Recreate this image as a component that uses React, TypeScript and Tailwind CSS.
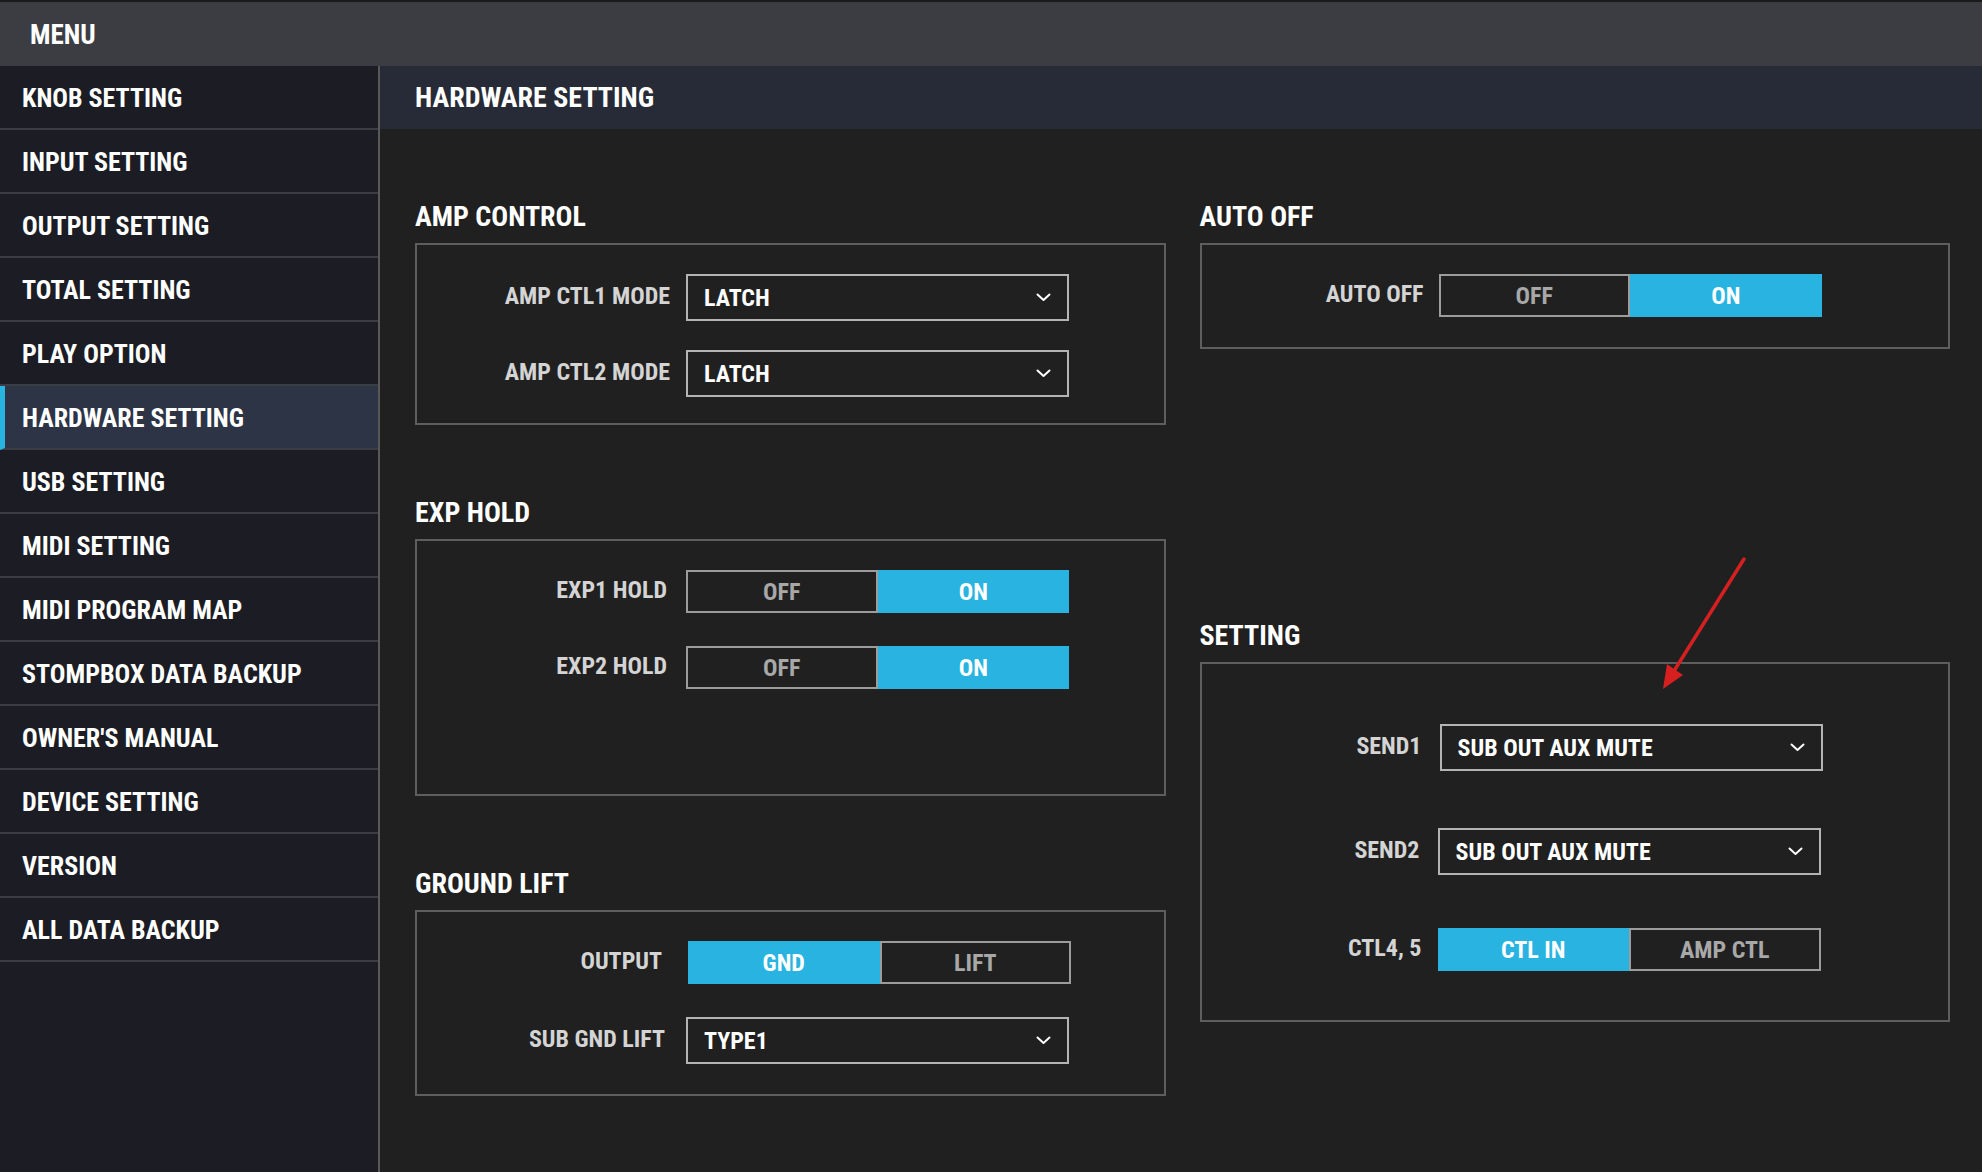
const menu = [
  "KNOB SETTING",
  "INPUT SETTING",
  "OUTPUT SETTING",
  "TOTAL SETTING",
  "PLAY OPTION",
  "HARDWARE SETTING",
  "USB SETTING",
  "MIDI SETTING",
  "MIDI PROGRAM MAP",
  "STOMPBOX DATA BACKUP",
  "OWNER'S MANUAL",
  "DEVICE SETTING",
  "VERSION",
  "ALL DATA BACKUP",
];

function Chevron() {
  return (
    <svg width="15" height="9" viewBox="0 0 15 9" fill="none">
      <path d="M1.5 1.5 L7.5 7 L13.5 1.5" stroke="white" strokeWidth="2" strokeLinecap="round" strokeLinejoin="round" />
    </svg>
  );
}

function Select({ value }: { value: string }) {
  return (
    <div className="flex h-[47px] w-[383px] items-center justify-between border-2 border-[#b4b4b4] pl-[16px] pr-[16px] text-[24px] text-white">
      <span>{value}</span>
      <Chevron />
    </div>
  );
}

function Toggle({ left, right, active }: { left: string; right: string; active: 0 | 1 }) {
  const on = "flex w-1/2 items-center justify-center bg-[#29b3e1] text-white";
  const off = "flex w-1/2 items-center justify-center border-2 border-[#9c9c9c] text-[#a8a8a8]";
  return (
    <div className="flex h-[43px] w-[383px] text-[24px]">
      <div className={active === 0 ? on : off}>{left}</div>
      <div className={active === 1 ? on : off}>{right}</div>
    </div>
  );
}

function Row({ label, labelClass, children }: { label: string; labelClass: string; children: React.ReactNode }) {
  return (
    <div className="flex items-center">
      <div className={`${labelClass} mb-[4px] text-right text-[24px] text-[#d4d4d4]`}>{label}</div>
      {children}
    </div>
  );
}

function Section({ title, className, boxClass, children }: { title: string; className?: string; boxClass: string; children: React.ReactNode }) {
  return (
    <div className={className}>
      <div className="mb-[10px] h-[32px] text-[28px] leading-[32px] text-white">{title}</div>
      <div className={`border-2 border-[#5e5e5e] ${boxClass}`}>{children}</div>
    </div>
  );
}

export default function App() {
  return (
    <div className="relative flex h-[1172px] w-full flex-col overflow-hidden bg-[#202020] font-['Roboto_Condensed','Liberation_Sans',sans-serif] font-bold">
      <div className="flex h-[66px] items-center border-t-2 border-[#191919] bg-[#3c3d42] pl-[30px] pt-[2px] text-[27px] text-white">
        MENU
      </div>
      <div className="flex flex-1">
        <aside className="w-[380px] border-r-2 border-[#585858] bg-[#1c1d24]">
          {menu.map((m) => {
            const active = m === "HARDWARE SETTING";
            return (
              <div
                key={m}
                className={`flex h-[64px] items-center border-b-2 border-[#3b3d45] pt-[3px] text-[26px] text-white ${
                  active ? "border-l-[5px] border-l-[#29b3e1] bg-[#2c3445] pl-[17px]" : "pl-[22px]"
                }`}
              >
                {m}
              </div>
            );
          })}
        </aside>
        <main className="flex flex-1 flex-col">
          <div className="flex h-[63px] items-center bg-[#262b37] pl-[35px] text-[28px] text-white">HARDWARE SETTING</div>
          <div className="grid grid-cols-2 gap-x-[34px] pl-[35px] pr-[32px] pt-[72px]">
            <div className="flex flex-col">
              <Section title="AMP CONTROL" boxClass="flex flex-col gap-[29px] pt-[29px] pb-[26px]">
                <Row label="AMP CTL1 MODE" labelClass="w-[269px] pr-[16px]">
                  <Select value="LATCH" />
                </Row>
                <Row label="AMP CTL2 MODE" labelClass="w-[269px] pr-[16px]">
                  <Select value="LATCH" />
                </Row>
              </Section>
              <Section title="EXP HOLD" className="mt-[72px]" boxClass="flex flex-col gap-[33px] pt-[29px] pb-[105px]">
                <Row label="EXP1 HOLD" labelClass="w-[269px] pr-[19px]">
                  <Toggle left="OFF" right="ON" active={1} />
                </Row>
                <Row label="EXP2 HOLD" labelClass="w-[269px] pr-[19px]">
                  <Toggle left="OFF" right="ON" active={1} />
                </Row>
              </Section>
              <Section title="GROUND LIFT" className="mt-[72px]" boxClass="flex flex-col gap-[33px] pt-[29px] pb-[30px]">
                <Row label="OUTPUT" labelClass="w-[271px] pr-[26px]">
                  <Toggle left="GND" right="LIFT" active={0} />
                </Row>
                <Row label="SUB GND LIFT" labelClass="w-[269px] pr-[21px]">
                  <Select value="TYPE1" />
                </Row>
              </Section>
            </div>
            <div className="flex flex-col">
              <Section title="AUTO OFF" boxClass="pt-[29px] pb-[30px]">
                <Row label="AUTO OFF" labelClass="w-[237px] pr-[15px]">
                  <Toggle left="OFF" right="ON" active={1} />
                </Row>
              </Section>
              <Section title="SETTING" className="mt-[271px]" boxClass="flex flex-col pt-[60px] pb-[49px]">
                <Row label="SEND1" labelClass="w-[238px] pr-[18px]">
                  <Select value="SUB OUT AUX MUTE" />
                </Row>
                <div className="mt-[57px]">
                  <Row label="SEND2" labelClass="w-[236px] pr-[18px]">
                    <Select value="SUB OUT AUX MUTE" />
                  </Row>
                </div>
                <div className="mt-[53px]">
                  <Row label="CTL4, 5" labelClass="w-[236px] pr-[16px]">
                    <Toggle left="CTL IN" right="AMP CTL" active={0} />
                  </Row>
                </div>
              </Section>
            </div>
          </div>
        </main>
      </div>
      <svg className="absolute left-[1650px] top-[550px]" width="110" height="150" viewBox="0 0 110 150">
        <line x1="94" y1="9" x2="24" y2="121" stroke="#d62020" strokeWidth="3.5" strokeLinecap="round" />
        <polygon points="13,139 33,125 24,119 17,114" fill="#d62020" />
      </svg>
    </div>
  );
}
